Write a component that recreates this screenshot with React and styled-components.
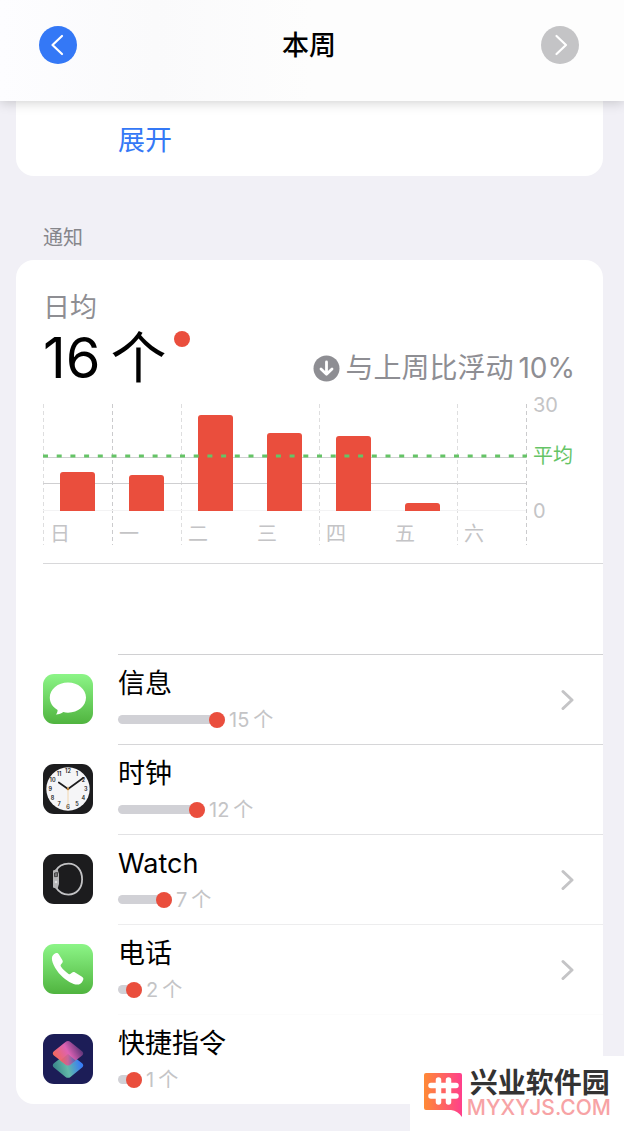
import React from "react";
import styled, { createGlobalStyle } from "styled-components";

const GlobalStyle = createGlobalStyle`
  * {
    box-sizing: border-box;
  }

  body {
    margin: 0;
    background: #f1f0f6;
    color: #000;
    font-family: Inter, "Noto Sans CJK SC", sans-serif;
  }

  button {
    border: 0;
    padding: 0;
    background: none;
    font: inherit;
    cursor: pointer;
  }
`;

const days = [
  { name: "日", height: 39 },
  { name: "一", height: 36 },
  { name: "二", height: 96 },
  { name: "三", height: 78 },
  { name: "四", height: 75 },
  { name: "五", height: 8 },
  { name: "六", height: 0 }
];

const MessagesIcon = () => (
  <svg width="50" height="50" viewBox="0 0 50 50">
    <defs>
      <linearGradient id="green" x1="0" y1="0" x2="0" y2="1">
        <stop offset="0" stopColor="#8cf587" />
        <stop offset="1" stopColor="#50b43f" />
      </linearGradient>
    </defs>
    <rect width="50" height="50" rx="11" fill="url(#green)" />
    <path
      d="M25 8.5C14.8 8.5 6.8 15.2 6.8 23.6c0 5.2 3 9.7 7.8 12.4-.1 1.7-.3 3.1-1.7 4.6 3.2-.1 5.5-1 7.4-2.5 1.500.4 3 .6 4.700.6 10.200 0 18-6.700 18-15.100S35.200 8.500 25 8.500z"
      fill="#fff"
    />
  </svg>
);

const ClockIcon = () => (
  <svg width="50" height="50" viewBox="0 0 50 50">
    <rect width="50" height="50" rx="11" fill="#1c1c1e" />
    <circle cx="25" cy="25" r="21.7" fill="#f5f5f7" />
    <g
      fontSize="5.5"
      fontWeight="600"
      fill="#222"
      textAnchor="middle"
      fontFamily="Inter, sans-serif"
    >
      {[12, 1, 2, 3, 4, 5, 6, 7, 8, 9, 10, 11].map((n, i) => {
        const angle = (i * Math.PI) / 6;
        return (
          <text
            key={n}
            x={25 + 17.8 * Math.sin(angle)}
            y={27 - 17.8 * Math.cos(angle)}
          >
            {n}
          </text>
        );
      })}
    </g>
    <path
      d="M25 25L15.8 18.5M25 25L40.5 13.8"
      stroke="#1c1c1e"
      strokeWidth="1.7"
      strokeLinecap="round"
    />
    <path d="M25 22v22" stroke="#f3cf9d" strokeWidth="0.8" />
    <circle cx="25" cy="25" r="1.3" fill="#b77a32" />
  </svg>
);

const WatchIcon = () => (
  <svg width="50" height="50" viewBox="0 0 50 50">
    <rect width="50" height="50" rx="11" fill="#1c1c1e" />
    <path
      d="M12.5 17C15.500 11.800 19.500 9.600 25.500 9.600c8.300 0 13.600 6.800 13.600 15.600s-5.300 15.400-13.600 15.400c-5.500 0-9.500-2.200-12.500-7"
      fill="none"
      stroke="#c2c2c4"
      strokeWidth="1.8"
    />
    <path d="M10 16.500l4.500-1.500 1.500 5v10l-1.500 5-4.500-1.500z" fill="#b5b5b7" />
    <path
      d="M11.500 19l3-.5v4l-3 .2z"
      fill="#77777a"
      stroke="#333"
      strokeWidth="0.8"
    />
    <circle cx="13" cy="28" r="1.3" fill="#dededf" />
  </svg>
);

const PhoneIcon = () => (
  <svg width="50" height="50" viewBox="0 0 50 50">
    <rect width="50" height="50" rx="11" fill="url(#green)" />
    <path
      d="M9.300 12.200c1-1.800 2.800-3.200 4.300-3.300 1 0 1.600.5 2.200 1.400l3.500 5.600c.8 1.300.5 2.300-.3 3.300l-1.100 1.300c-.5.700-.5 1.300 0 2 2.100 3 4.700 5.400 7.700 7.400.7.500 1.400.4 2-.1l1.300-1.100c.9-.8 2-.9 3.200-.2l6.500 3.900c1.600 1 2.100 1.900 1.600 3.300-.7 2.200-2.300 4-4.300 4.700-4.200 1.200-12.200-3.200-18-9.200C12 25.200 7.500 16.500 9.300 12.200z"
      fill="#fff"
    />
  </svg>
);

const ShortcutsIcon = () => (
  <svg width="50" height="50" viewBox="0 0 50 50">
    <defs>
      <linearGradient id="lower" x1="0" y1="0.5" x2="1" y2="0.3">
        <stop offset="0.05" stopColor="#3c8a8c" />
        <stop offset="0.45" stopColor="#62b9a8" />
        <stop offset="0.9" stopColor="#387df5" />
      </linearGradient>
      <linearGradient id="upper" x1="0" y1="0.8" x2="1" y2="0.35">
        <stop offset="0.1" stopColor="#f2695a" />
        <stop offset="0.55" stopColor="#dd62b4" />
        <stop offset="1" stopColor="#4f2f72" />
      </linearGradient>
      <linearGradient id="overlap" x1="0" y1="0" x2="1" y2="0">
        <stop offset="0" stopColor="#ea6560" />
        <stop offset="0.5" stopColor="#c9649a" />
        <stop offset="1" stopColor="#4b69b8" />
      </linearGradient>
    </defs>
    <rect width="50" height="50" rx="11" fill="#1c1d57" />
    <path
      d="M22.5 20.300L10.900 29.200c-1.500 1.200-1.500 3.200 0 4.400l11.600 9.300c1.500 1.200 3.500 1.200 5 0l11.600-9.300c1.500-1.200 1.500-3.200 0-4.400L27.500 20.300z"
      fill="url(#lower)"
    />
    <path
      d="M22.500 8L10.900 17.200c-1.500 1.200-1.500 3.200 0 4.400l11.600 8.800c1.500 1.200 3.500 1.200 5 0l11.600-8.800c1.500-1.200 1.500-3.200 0-4.400L27.500 8c-1.500-1.200-3.500-1.200-5 0z"
      fill="url(#upper)"
    />
    <path
      d="M17.300 26.400l5.200 4c1.500 1.200 3.500 1.200 5 0l5.200-4-7.700-6.300z"
      fill="url(#overlap)"
    />
  </svg>
);

const apps = [
  { name: "信息", count: 15, Icon: MessagesIcon, arrow: true, line: "#d0d0d2" },
  { name: "时钟", count: 12, Icon: ClockIcon, line: "#d6d6d8" },
  { name: "Watch", count: 7, Icon: WatchIcon, arrow: true, line: "#e2e2e4" },
  { name: "电话", count: 2, Icon: PhoneIcon, arrow: true, line: "#ededee" },
  { name: "快捷指令", count: 1, Icon: ShortcutsIcon, line: "#fcfcfc" }
];

const Chart = () => (
  <ChartSvg viewBox="0 0 532 142" role="img" aria-label="通知">
    {[0, 1, 2, 4, 6, 7].map(n => (
      <line
        key={n}
        x1={n * 69 + 0.5}
        x2={n * 69 + 0.5}
        y1="0"
        y2="141"
        stroke={n === 1 || n === 7 ? "#cbcbcd" : "#dededf"}
        strokeDasharray="4 3"
      />
    ))}
    <path d="M0 53.5H483M0 79.5H483" stroke="#cfcfd1" />
    <path d="M0 106.5H483" stroke="#f3f3f4" />
    {days.map((day, i) => {
      const x = 17 + i * 69;
      const r = 3;
      return (
        <React.Fragment key={day.name}>
          {day.height > 0 && (
            <path
              d={`M${x} 107v${r - day.height}q0 -${r} ${r} -${r}h${35 -
                r * 2}q${r} 0 ${r} ${r}V107z`}
              fill="#ea4e3d"
            />
          )}
          <text x={7 + i * 69} y="137" fontSize="20" fill="#c4c4c6">
            {day.name}
          </text>
        </React.Fragment>
      );
    })}
    <line
      x1="0"
      x2="484"
      y1="52"
      y2="52"
      stroke="#65c466"
      strokeWidth="3"
      strokeDasharray="5 8.7"
    />
    <g fontSize="20" fill="#c4c4c6">
      <text x="490" y="8">
        30
      </text>
      <text x="490" y="59" fill="#65c466">
        平均
      </text>
      <text x="490" y="114">
        0
      </text>
    </g>
  </ChartSvg>
);

const Chevron = ({ back }) => (
  <svg width="38" height="38" viewBox="0 0 38 38">
    <path
      d={back ? "M23 10l-9.500 9 9.500 9" : "M15.500 10l9.500 9-9.500 9"}
      fill="none"
      stroke="#fff"
      strokeWidth="2.200"
      strokeLinecap="round"
      strokeLinejoin="round"
    />
  </svg>
);

const AppRow = ({ app }) => {
  const { name, count, Icon, arrow, line } = app;
  return (
    <Row>
      <Icon />
      <RowBody $line={line}>
        <div>
          <AppName>{name}</AppName>
          <Usage>
            <Track style={{ width: Math.max(24, Math.round(count * 6.6) + 8) }}>
              <Knob />
            </Track>
            <span>{count}</span>
            <span>个</span>
          </Usage>
        </div>
        {arrow && (
          <svg width="14" height="22" viewBox="0 0 14 22">
            <path
              d="M2 2.500l9 8.500-9 8.500"
              fill="none"
              stroke="#c4c4c6"
              strokeWidth="3"
              strokeLinecap="round"
              strokeLinejoin="round"
            />
          </svg>
        )}
      </RowBody>
    </Row>
  );
};

const App = () => (
  <>
    <GlobalStyle />
    <Header>
      <RoundButton $color="#3478f6" aria-label="上一周">
        <Chevron back />
      </RoundButton>
      <Title>本周</Title>
      <RoundButton $color="#c4c4c6" aria-label="下一周">
        <Chevron />
      </RoundButton>
    </Header>
    <Main>
      <MoreCard>
        <MoreButton>展开</MoreButton>
      </MoreCard>
      <SectionTitle>通知</SectionTitle>
      <Card>
        <Summary>
          <Label>日均</Label>
          <Figures>
            <Average>
              <span>16</span>
              <span>个</span>
              <Dot />
            </Average>
            <Change>
              <svg width="27" height="27" viewBox="0 0 27 27">
                <circle cx="13.5" cy="13.5" r="13" fill="#8e8e93" />
                <path
                  d="M13.5 7v12M8 14l5.500 5.300L19 14"
                  fill="none"
                  stroke="#fff"
                  strokeWidth="2.8"
                  strokeLinecap="round"
                  strokeLinejoin="round"
                />
              </svg>
              <span>与上周比浮动</span>
              <span>10%</span>
            </Change>
          </Figures>
          <Chart />
        </Summary>
        <List>
          {apps.map(app => (
            <AppRow key={app.name} app={app} />
          ))}
        </List>
      </Card>
    </Main>
    <Watermark>
      <svg width="40" height="46" viewBox="0 0 40 46">
        <defs>
          <linearGradient id="brand" x1="0" y1="0" x2="1" y2="0">
            <stop offset="0" stopColor="#ff8a35" />
            <stop offset="1" stopColor="#ff3f8c" />
          </linearGradient>
        </defs>
        <path
          d="M3 1h34q2 0 2 2v42q-4-6-11-7H3q-2 0-2-2V3q0-2 2-2z"
          fill="url(#brand)"
        />
        <path
          d="M15.500 8v22M25.500 8v22M8 13.500h25M8 24h25"
          stroke="#fff"
          strokeWidth="5.500"
          strokeLinecap="round"
        />
      </svg>
      <div>
        <BrandName>兴业软件园</BrandName>
        <BrandSite>MYXYJS.COM</BrandSite>
      </div>
    </Watermark>
  </>
);

const Header = styled.header`
  position: sticky;
  top: 0;
  z-index: 1;
  display: flex;
  justify-content: space-between;
  height: 101px;
  padding: 26px 45px 0 39px;
  background: linear-gradient(90deg, #fdfdff, #fafafb 25%, #fdfdfd 50%);
  box-shadow: 0 1px 12px rgba(0, 0, 0, 0.2);
`;

const RoundButton = styled.button`
  width: 38px;
  height: 38px;
  border-radius: 50%;
  background: ${props => props.$color};

  > svg {
    display: block;
  }
`;

const Title = styled.h1`
  margin: 0;
  font-size: 27px;
  line-height: 40px;
  font-weight: 500;
`;

const Main = styled.main`
  padding: 0 21px 26px 16px;
`;

const MoreCard = styled.section`
  padding: 20px 102px 15px;
  border-radius: 0 0 18px 18px;
  background: #fff;
`;

const MoreButton = styled.button`
  display: block;
  color: #3478f6;
  font-size: 27px;
  line-height: 40px;
`;

const SectionTitle = styled.h2`
  margin: 0;
  padding: 47px 27px 7px;
  color: #86868b;
  font-size: 20px;
  line-height: 30px;
  font-weight: 400;
`;

const Card = styled.section`
  border-radius: 18px;
  background: #fff;
`;

const Summary = styled.div`
  margin-left: 27px;
  padding: 34px 28px 17px 0;
  border-bottom: 1px solid #d8d8da;
`;

const Label = styled.div`
  color: #8e8e93;
  font-size: 27px;
  line-height: 28px;
`;

const Figures = styled.div`
  display: flex;
  justify-content: space-between;
  align-items: flex-end;
  padding: 4px 0 14px;
`;

const Average = styled.div`
  display: flex;
  gap: 10px;
  font-size: 56px;
  line-height: 64px;
`;

const Dot = styled.span`
  width: 16px;
  height: 16px;
  margin: 5px 0 0 -3px;
  border-radius: 50%;
  background: #ea4e3d;
`;

const Change = styled.div`
  display: flex;
  align-items: center;
  gap: 5px;
  color: #8e8e93;
  font-size: 28px;
  line-height: 44px;
`;

const ChartSvg = styled.svg`
  display: block;
  width: 100%;
  overflow: visible;
`;

const List = styled.ul`
  margin: 0;
  padding: 90px 0 0 27px;
  list-style: none;
`;

const Row = styled.li`
  display: flex;
  align-items: center;
  gap: 25px;
`;

const RowBody = styled.div`
  flex: 1;
  display: flex;
  justify-content: space-between;
  align-items: center;
  height: 90px;
  padding-right: 28px;
  border-top: 1px solid ${props => props.$line};
`;

const AppName = styled.div`
  font-size: 27px;
  line-height: 40px;
`;

const Usage = styled.div`
  display: flex;
  align-items: center;
  gap: 4px;
  color: #c4c4c6;
  font-size: 20px;
  line-height: 32px;
`;

const Track = styled.div`
  display: flex;
  justify-content: flex-end;
  align-items: center;
  height: 9px;
  border-radius: 5px;
  background: #d1d1d6;
`;

const Knob = styled.span`
  flex: none;
  width: 16px;
  height: 16px;
  border-radius: 50%;
  background: #ea4e3d;
`;

const Watermark = styled.footer`
  position: fixed;
  right: 0;
  bottom: 0;
  z-index: 2;
  display: flex;
  align-items: center;
  gap: 4px;
  height: 75px;
  padding: 2px 13px 0;
  background: #fff;
`;

const BrandName = styled.div`
  padding-left: 3px;
  color: #333;
  font-size: 28px;
  line-height: 26px;
  font-weight: 700;
`;

const BrandSite = styled.div`
  color: #f7a3a5;
  font-size: 21px;
  line-height: 24px;
  font-weight: 500;
`;

export default App;
